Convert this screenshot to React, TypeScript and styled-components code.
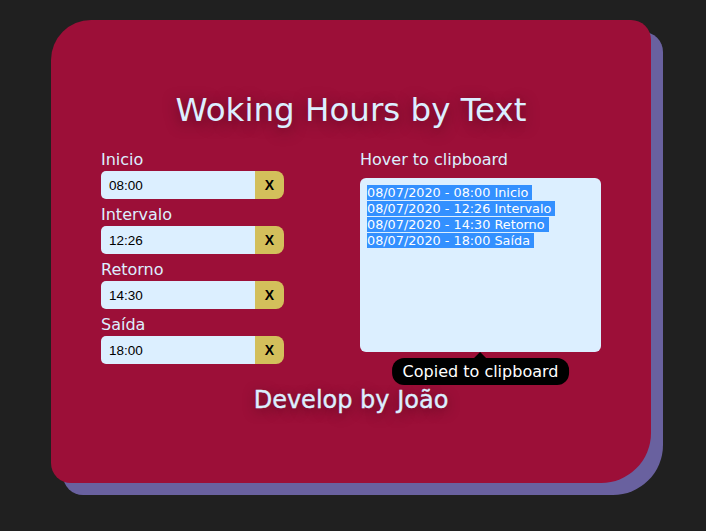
import React from "react";
import styled, { createGlobalStyle } from "styled-components";

const Global = createGlobalStyle`
  html, body { margin: 0; padding: 0; background: #202020; }
  body { font-family: "DejaVu Sans", "Open Sans", sans-serif; }
`;

const Page = styled.div`
  padding: 20px 0 40px 51px;
`;

const Card = styled.div`
  box-sizing: border-box;
  width: 600px;
  height: 463px;
  background: #9c0f38;
  border-radius: 40px 20px 50px 20px;
  box-shadow: 12px 12px 0 0 #69619f;
  padding: 70px 50px 0;
  display: flex;
  flex-direction: column;
  align-items: stretch;
`;

const Title = styled.h1`
  margin: 0;
  font-size: 32.5px;
  line-height: 40px;
  font-weight: 400;
  color: #dcefff;
  text-align: center;
  text-shadow: 0 3px 14px rgba(40, 0, 15, 0.55);
`;

const Columns = styled.div`
  margin-top: 20px;
  display: grid;
  grid-template-columns: 259px 241px;
`;

const LeftCol = styled.div`
  display: flex;
  flex-direction: column;
  gap: 6px;
`;

const Field = styled.div`
  display: flex;
  flex-direction: column;
  gap: 1px;
`;

const Label = styled.label`
  font-size: 16px;
  line-height: 20px;
  color: #dcefff;
`;

const InputRow = styled.div`
  display: flex;
  width: 183px;
  height: 28px;
`;

const TimeInput = styled.input`
  box-sizing: border-box;
  flex: 1;
  min-width: 0;
  height: 28px;
  border: none;
  outline: none;
  background: #dcefff;
  border-radius: 5px 0 0 5px;
  padding: 0 0 0 8px;
  font-family: "Liberation Sans", Arial, sans-serif;
  font-size: 13.5px;
  color: #000;
`;

const ClearButton = styled.button`
  width: 29px;
  height: 28px;
  border: none;
  padding: 0;
  background: #d3bf5b;
  border-radius: 0 8px 8px 0;
  font-family: "Liberation Sans", Arial, sans-serif;
  font-weight: 700;
  font-size: 14px;
  color: #000;
`;

const RightCol = styled.div`
  display: flex;
  flex-direction: column;
`;

const AreaWrap = styled.div`
  position: relative;
  margin-top: 8px;
`;

const Area = styled.div`
  box-sizing: border-box;
  width: 241px;
  height: 174px;
  background: #dcefff;
  border-radius: 6px;
  padding: 7px;
  font-size: 12.8px;
  line-height: 16px;
`;

const Line = styled.div`
  display: block;
`;

const Sel = styled.span`
  background: #3390ff;
  color: #fff;
  padding-right: 4px;
`;

const Tooltip = styled.div`
  position: absolute;
  top: 180px;
  left: 50%;
  transform: translateX(-50%);
  background: #000;
  color: #fff;
  font-size: 16px;
  line-height: 27px;
  height: 27px;
  padding: 0 11px;
  border-radius: 12px;
  white-space: nowrap;
  &::before {
    content: "";
    position: absolute;
    top: -6px;
    left: 50%;
    margin-left: -6px;
    border-left: 6px solid transparent;
    border-right: 6px solid transparent;
    border-bottom: 6px solid #000;
  }
`;

const Footer = styled.div`
  margin-top: 22px;
  text-align: center;
  font-size: 24px;
  line-height: 28px;
  font-weight: 400;
  color: #dcefff;
  -webkit-text-stroke: 0.4px #dcefff;
  text-shadow: 0 3px 12px rgba(40, 0, 15, 0.55);
`;

const fields = [
  { label: "Inicio", value: "08:00" },
  { label: "Intervalo", value: "12:26" },
  { label: "Retorno", value: "14:30" },
  { label: "Saída", value: "18:00" },
];

export default function App() {
  return (
    <>
      <Global />
      <Page>
        <Card>
          <Title>Woking Hours by Text</Title>
          <Columns>
            <LeftCol>
              {fields.map((f) => (
                <Field key={f.label}>
                  <Label>{f.label}</Label>
                  <InputRow>
                    <TimeInput defaultValue={f.value} />
                    <ClearButton>X</ClearButton>
                  </InputRow>
                </Field>
              ))}
            </LeftCol>
            <RightCol>
              <Label>Hover to clipboard</Label>
              <AreaWrap>
                <Area>
                  {fields.map((f) => (
                    <Line key={f.label}>
                      <Sel>
                        08/07/2020 - {f.value} {f.label}
                      </Sel>
                    </Line>
                  ))}
                </Area>
                <Tooltip>Copied to clipboard</Tooltip>
              </AreaWrap>
            </RightCol>
          </Columns>
          <Footer>Develop by João</Footer>
        </Card>
      </Page>
    </>
  );
}
